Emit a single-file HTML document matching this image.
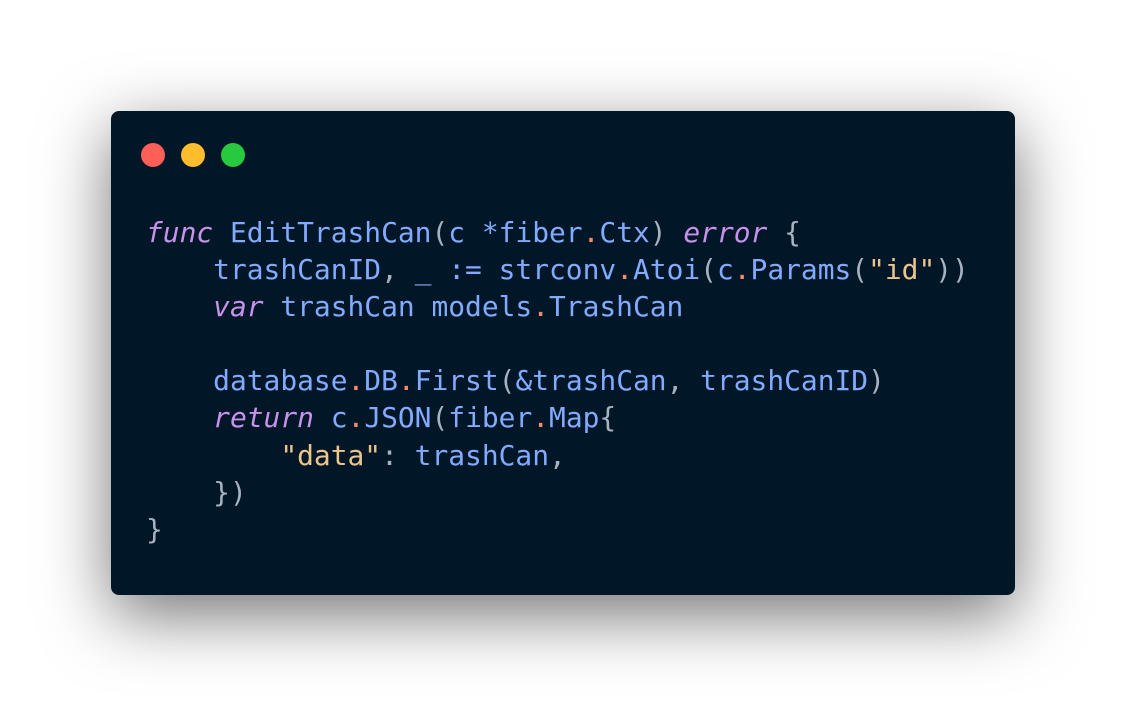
<!DOCTYPE html>
<html><head><meta charset="utf-8"><style>
html,body{margin:0;padding:0;background:#fff;width:1126px;height:706px;overflow:hidden}
.win{position:absolute;left:111px;top:111px;width:904px;height:484px;background:#011627;border-radius:8px;box-shadow:0 20px 68px rgba(0,0,0,0.55)}
.dot{position:absolute;top:32px;width:24px;height:24px;border-radius:50%}
pre{position:absolute;left:35px;top:103px;margin:0;font-family:"DejaVu Sans Mono","Liberation Mono",monospace;font-size:27.9px;line-height:37.1px;color:#82aaff}
.k{color:#c792ea;font-style:italic}.d{color:#f78c6c}.p{color:#a8b3c2}.s{color:#ecc48d}
</style></head><body>
<div class="win">
<div class="dot" style="left:30px;background:#ff5f56"></div>
<div class="dot" style="left:70px;background:#ffbd2e"></div>
<div class="dot" style="left:110px;background:#27c93f"></div>
<pre><span class="k">func</span> EditTrashCan<span class="p">(</span>c *fiber<span class="d">.</span>Ctx<span class="p">)</span> <span class="k">error</span> <span class="p">{</span>
    trashCanID<span class="p">,</span> _ := strconv<span class="d">.</span>Atoi<span class="p">(</span>c<span class="d">.</span>Params<span class="p">(</span><span class="s">"id"</span><span class="p">))</span>
    <span class="k">var</span> trashCan models<span class="d">.</span>TrashCan

    database<span class="d">.</span>DB<span class="d">.</span>First<span class="p">(</span>&amp;trashCan<span class="p">,</span> trashCanID<span class="p">)</span>
    <span class="k">return</span> c<span class="d">.</span>JSON<span class="p">(</span>fiber<span class="d">.</span>Map<span class="p">{</span>
        <span class="s">"data"</span><span class="p">:</span> trashCan<span class="p">,</span>
    <span class="p">})</span>
<span class="p">}</span></pre>
</div>
</body></html>
